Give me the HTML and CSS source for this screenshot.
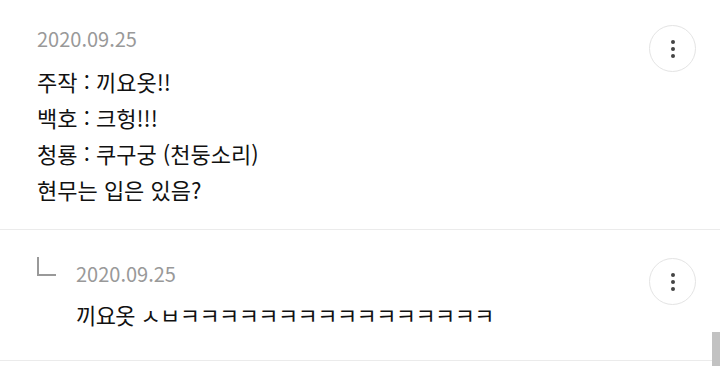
FILE: index.html
```html
<!DOCTYPE html>
<html lang="ko">
<head>
    <meta charset="UTF-8">
    <meta name="viewport" content="width=device-width, initial-scale=1.0">
    <title>댓글</title>
    <link rel="stylesheet" href="styles.css">
</head>
<body>
    <div class="comments">
        <div class="comment">
            <div class="comment-body">
                <div class="comment-date">2020.09.25</div>
                <div class="comment-text">
                    <p>주작 : 끼요옷!!</p>
                    <p>백호 : 크헝!!!</p>
                    <p>청룡 : 쿠구궁 (천둥소리)</p>
                    <p>현무는 입은 있음?</p>
                </div>
            </div>
            <button class="more-btn" aria-label="더보기"><span></span><span></span><span></span></button>
        </div>
        <div class="comment reply">
            <div class="reply-mark"></div>
            <div class="comment-body">
                <div class="comment-date">2020.09.25</div>
                <div class="comment-text">
                    <p>끼요옷 ㅅㅂㅋㅋㅋㅋㅋㅋㅋㅋㅋㅋㅋㅋㅋㅋㅋㅋ</p>
                </div>
            </div>
            <button class="more-btn" aria-label="더보기"><span></span><span></span><span></span></button>
        </div>
    </div>
    <div class="scrollbar"></div>
</body>
</html>
```

FILE: styles.css
```css
* {
    box-sizing: border-box;
}
body {
    margin: 0;
    font-family: 'Noto Sans CJK KR', 'Noto Sans', sans-serif;
    background: white;
    color: #111;
    height: 366px;
    overflow: hidden;
}
.comment {
    display: flex;
    align-items: flex-start;
    padding: 25px 24px 0 37px;
    border-bottom: 1px solid #ebebeb;
    height: 230px;
}
.comment-body {
    flex: 1;
}
.comment-date {
    font-size: 20px;
    line-height: 28px;
    color: #999;
}
.comment-text {
    margin-top: 10px;
}
.comment-text p {
    margin: 0;
    font-size: 22px;
    line-height: 36px;
}
.more-btn {
    width: 47px;
    height: 47px;
    border-radius: 50%;
    border: 1px solid #e4e4e4;
    background: white;
    display: flex;
    flex-direction: column;
    align-items: center;
    justify-content: center;
    gap: 3px;
    padding: 0;
    margin-top: 0;
}
.more-btn span {
    width: 4px;
    height: 4px;
    border-radius: 50%;
    background: #444;
}
.reply {
    height: 131px;
    padding-top: 30px;
}
.reply .more-btn {
    margin-top: -2px;
}
.reply-mark {
    width: 19px;
    height: 19px;
    border-left: 2px solid #999;
    border-bottom: 2px solid #999;
    margin-top: -3px;
    margin-right: 20px;
}
.reply .comment-text {
    margin-top: 8px;
}
.reply .comment-text p {
    letter-spacing: -0.6px;
}
.scrollbar {
    position: fixed;
    right: 0;
    bottom: 0;
    width: 8px;
    height: 34px;
    background: #c2c2c2;
}
```
